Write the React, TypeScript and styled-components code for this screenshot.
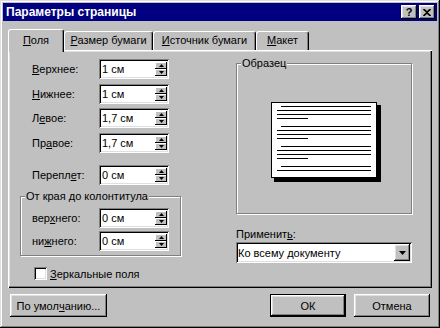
import React from "react";
import styled, { createGlobalStyle } from "styled-components";

const GlobalStyle = createGlobalStyle`
  html, body {
    margin: 0;
    padding: 0;
    background: #c0c0c0;
  }
  body {
    font-family: "Liberation Sans", Arial, sans-serif;
    font-size: 11px;
    color: #000;
  }
  * {
    box-sizing: border-box;
  }
`;

const raised = `
  box-shadow: inset -1px -1px #000, inset 1px 1px #fff, inset -2px -2px #808080, inset 2px 2px #dfdfdf;
`;

const sunken = `
  box-shadow: inset 1px 1px #808080, inset -1px -1px #fff, inset 2px 2px #000, inset -2px -2px #dfdfdf;
`;

const Window = styled.div`
  width: 440px;
  height: 328px;
  padding: 3px;
  background: #c0c0c0;
  box-shadow: inset -1px -1px #000, inset 1px 1px #dfdfdf, inset -2px -2px #808080, inset 2px 2px #fff;
  display: flex;
  flex-direction: column;
`;

const TitleBar = styled.div`
  height: 18px;
  background: #000080;
  display: flex;
  align-items: center;
  padding: 0 2px 0 3px;
  color: #fff;
  font-weight: bold;
  font-size: 12px;
`;

const Title = styled.div`
  flex: 1;
  white-space: nowrap;
`;

const TitleButton = styled.div`
  width: 16px;
  height: 14px;
  margin-left: 2px;
  background: #c0c0c0;
  ${raised}
  display: flex;
  align-items: center;
  justify-content: center;
  color: #000;
  font-size: 11px;
  font-weight: bold;
  line-height: 14px;
`;

const TabStrip = styled.div`
  display: flex;
  align-items: flex-end;
  height: 21px;
  margin: 8px 5px 0;
  position: relative;
  z-index: 1;
`;

const Tab = styled.div<{ $active?: boolean; $width: number }>`
  width: ${(p) => p.$width}px;
  height: ${(p) => (p.$active ? 23 : 19)}px;
  margin-bottom: ${(p) => (p.$active ? -2 : 0)}px;
  padding-top: ${(p) => (p.$active ? 4 : 2)}px;
  background: #c0c0c0;
  border-top: 1px solid #fff;
  border-left: 1px solid #fff;
  border-right: 1px solid #000;
  border-radius: 3px 3px 0 0;
  box-shadow: inset -1px 0 #808080;
  text-align: center;
  white-space: nowrap;
`;

const Panel = styled.div`
  margin: 0 5px;
  height: 238px;
  box-shadow: inset 1px 1px #fff, inset -1px -1px #000, inset -2px -2px #808080, inset 2px 2px #dfdfdf;
  display: flex;
  padding: 9px 0 0 12px;
`;

const LeftCol = styled.div`
  width: 161px;
  display: flex;
  flex-direction: column;
`;

const RightCol = styled.div`
  width: 176px;
  margin-left: 55px;
  margin-top: -2px;
  display: flex;
  flex-direction: column;
`;

const FieldRow = styled.div<{ $gap?: number }>`
  display: flex;
  align-items: center;
  height: 20px;
  margin-top: ${(p) => p.$gap ?? 0}px;
  padding-left: 12px;
`;

const Label = styled.div`
  width: 67px;
  white-space: nowrap;
`;

const Accel = styled.span`
  text-decoration: underline;
`;

const SpinField = styled.div`
  width: 70px;
  height: 20px;
  background: #fff;
  ${sunken}
  display: flex;
  align-items: center;
  padding: 2px 2px 2px 3px;
`;

const SpinText = styled.div`
  flex: 1;
`;

const SpinButtons = styled.div`
  width: 12px;
  display: flex;
  flex-direction: column;
`;

const SpinButton = styled.div`
  height: 7px;
  background: #c0c0c0;
  box-shadow: inset -1px -1px #000, inset 1px 1px #fff;
  display: flex;
  align-items: center;
  justify-content: center;
`;

const Group = styled.fieldset`
  margin: 5px 0 0;
  padding: 0;
  min-width: 0;
  border: 1px solid #808080;
  box-shadow: inset 1px 1px #fff, 1px 1px #fff;
`;

const Legend = styled.legend`
  margin-left: 4px;
  padding: 0 1px;
  line-height: 13px;
  background: #c0c0c0;
`;

const GroupBody = styled.div`
  display: flex;
  flex-direction: column;
  gap: 3px;
  padding: 5px 0 4px 0;
  & > ${FieldRow} {
    padding-left: 11px;
  }
`;

const CheckRow = styled.div`
  display: flex;
  align-items: center;
  margin-top: 11px;
  padding-left: 14px;
  gap: 3px;
`;

const CheckBox = styled.div`
  width: 13px;
  height: 13px;
  background: #fff;
  ${sunken}
`;

const Preview = styled.fieldset`
  margin: 0;
  padding: 0;
  height: 157px;
  min-width: 0;
  border: 1px solid #808080;
  box-shadow: inset 1px 1px #fff, 1px 1px #fff;
`;

const PageSvg = styled.svg`
  display: block;
  margin: 31px 0 0 33px;
`;

const ApplyLabel = styled.div`
  margin-top: 14px;
  line-height: 13px;
`;

const Combo = styled.div`
  margin-top: 1px;
  height: 21px;
  background: #fff;
  ${sunken}
  display: flex;
  align-items: center;
  padding: 2px;
`;

const ComboText = styled.div`
  flex: 1;
`;

const ComboButton = styled.div`
  width: 16px;
  height: 17px;
  background: #c0c0c0;
  ${raised}
  display: flex;
  align-items: center;
  justify-content: center;
`;

const ButtonBar = styled.div`
  display: flex;
  gap: 8px;
  margin: 6px 5px 0;
  padding: 0 2px;
`;

const Button = styled.div<{ $width: number; $default?: boolean }>`
  width: ${(p) => p.$width}px;
  height: 23px;
  background: #c0c0c0;
  ${(p) => (p.$default ? "border: 1px solid #000;" : "")}
  ${raised}
  display: flex;
  align-items: center;
  justify-content: center;
  white-space: nowrap;
`;

const Spacer = styled.div`
  flex: 1;
`;

const ArrowUp = () => (
  <svg width="5" height="3" viewBox="0 0 5 3">
    <path d="M2.5 0L5 3H0z" fill="#000" />
  </svg>
);

const ArrowDown = ({ w = 5, h = 3 }: { w?: number; h?: number }) => (
  <svg width={w} height={h} viewBox={`0 0 ${w} ${h}`}>
    <path d={`M0 0H${w}L${w / 2} ${h}z`} fill="#000" />
  </svg>
);

const Spin = ({ value }: { value: string }) => (
  <SpinField>
    <SpinText>{value}</SpinText>
    <SpinButtons>
      <SpinButton>
        <ArrowUp />
      </SpinButton>
      <SpinButton>
        <ArrowDown />
      </SpinButton>
    </SpinButtons>
  </SpinField>
);

const paragraphs = [
  { y: 5, lines: 4 },
  { y: 25, lines: 4 },
  { y: 45, lines: 4 },
  { y: 65, lines: 2 },
];

const PagePreview = () => (
  <PageSvg width="111" height="81" viewBox="0 0 111 81" shapeRendering="crispEdges">
    <rect x="4" y="4" width="107" height="77" fill="#000" />
    <rect x="1.5" y="1.5" width="105" height="75" fill="#fff" stroke="#000" />
    {paragraphs.map((p) =>
      Array.from({ length: p.lines }).map((_, i) => (
        <line
          key={`${p.y}-${i}`}
          x1={i === 0 ? 11 : 7}
          x2={p.lines === 4 && i === 3 ? 38 : 101}
          y1={p.y + i * 4 + 0.5}
          y2={p.y + i * 4 + 0.5}
          stroke="#000"
        />
      ))
    )}
  </PageSvg>
);

const App = () => {
  return (
    <>
      <GlobalStyle />
      <Window>
        <TitleBar>
          <Title>Параметры страницы</Title>
          <TitleButton>?</TitleButton>
          <TitleButton>
            <svg width="8" height="7" viewBox="0 0 8 7">
              <path d="M0.5 0L4 3.2 7.5 0M0.5 7L4 3.8 7.5 7" stroke="#000" strokeWidth="1.6" fill="none" />
            </svg>
          </TitleButton>
        </TitleBar>

        <TabStrip>
          <Tab $active $width={56}>
            <Accel>П</Accel>оля
          </Tab>
          <Tab $width={89}>
            <Accel>Р</Accel>азмер бумаги
          </Tab>
          <Tab $width={103}>
            <Accel>И</Accel>сточник бумаги
          </Tab>
          <Tab $width={53}>
            <Accel>М</Accel>акет
          </Tab>
        </TabStrip>

        <Panel>
          <LeftCol>
            <FieldRow>
              <Label>
                <Accel>В</Accel>ерхнее:
              </Label>
              <Spin value="1 см" />
            </FieldRow>
            <FieldRow $gap={5}>
              <Label>
                <Accel>Н</Accel>ижнее:
              </Label>
              <Spin value="1 см" />
            </FieldRow>
            <FieldRow $gap={4}>
              <Label>
                Л<Accel>е</Accel>вое:
              </Label>
              <Spin value="1,7 см" />
            </FieldRow>
            <FieldRow $gap={5}>
              <Label>
                Пр<Accel>а</Accel>вое:
              </Label>
              <Spin value="1,7 см" />
            </FieldRow>
            <FieldRow $gap={12}>
              <Label>
                Перепл<Accel>е</Accel>т:
              </Label>
              <Spin value="0 см" />
            </FieldRow>

            <Group>
              <Legend>От края до колонтитула</Legend>
              <GroupBody>
                <FieldRow>
                  <Label>
                    вер<Accel>х</Accel>него:
                  </Label>
                  <Spin value="0 см" />
                </FieldRow>
                <FieldRow>
                  <Label>
                    ни<Accel>ж</Accel>него:
                  </Label>
                  <Spin value="0 см" />
                </FieldRow>
              </GroupBody>
            </Group>

            <CheckRow>
              <CheckBox />
              <span>
                <Accel>З</Accel>еркальные поля
              </span>
            </CheckRow>
          </LeftCol>

          <RightCol>
            <Preview>
              <Legend>Образец</Legend>
              <PagePreview />
            </Preview>
            <ApplyLabel>
              Применит<Accel>ь</Accel>:
            </ApplyLabel>
            <Combo>
              <ComboText>Ко всему документу</ComboText>
              <ComboButton>
                <ArrowDown w={7} h={4} />
              </ComboButton>
            </Combo>
          </RightCol>
        </Panel>

        <ButtonBar>
          <Button $width={97}>
            По умол<Accel>ч</Accel>анию...
          </Button>
          <Spacer />
          <Button $default $width={76}>
            ОК
          </Button>
          <Button $width={76}>Отмена</Button>
        </ButtonBar>
      </Window>
    </>
  );
};

export default App;
